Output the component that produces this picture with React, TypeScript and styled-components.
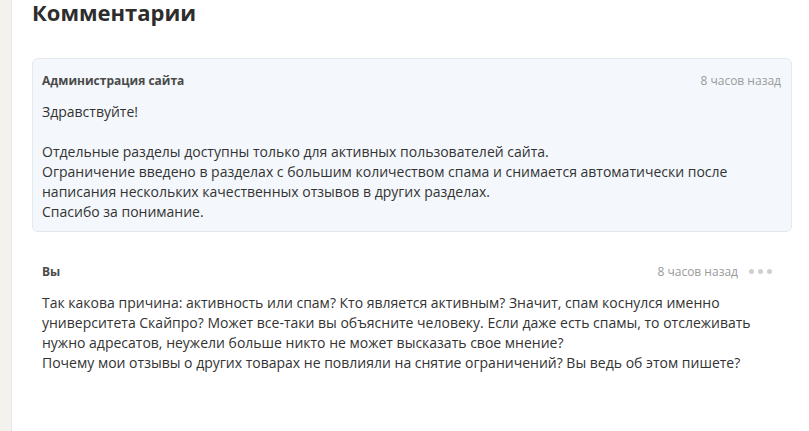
import React from "react";
import styled, { createGlobalStyle } from "styled-components";

const GlobalStyle = createGlobalStyle`
  html, body {
    margin: 0;
    padding: 0;
    background: #fff;
  }
  body {
    font-family: "Open Sans", "DejaVu Sans", sans-serif;
    color: #333;
  }
`;

const Page = styled.div`
  display: flex;
  min-height: 431px;
  overflow: hidden;
`;

const SideStrip = styled.div`
  flex: 0 0 11px;
  background: #f3f2ee;
  border-right: 1px solid #e9e7e1;
`;

const Main = styled.main`
  flex: 1;
  padding: 0 17px 0 20px;
`;

const Title = styled.h2`
  margin: 0 0 34px;
  font-size: 22px;
  line-height: 24px;
  font-weight: 700;
  color: #2d2d2d;
`;

const List = styled.div`
  display: flex;
  flex-direction: column;
  gap: 17px;
`;

const Comment = styled.article<{ $highlighted?: boolean }>`
  padding: 13px 10px 9px 9px;
  border: 1px solid ${(p) => (p.$highlighted ? "#e3e8ee" : "transparent")};
  border-radius: 6px;
  background: ${(p) => (p.$highlighted ? "#f4f8fc" : "transparent")};
`;

const Header = styled.div`
  display: flex;
  align-items: center;
  justify-content: space-between;
  height: 16px;
  margin-bottom: 14px;
`;

const Author = styled.span`
  font-size: 12px;
  font-weight: 700;
  color: #4a4a4a;
`;

const Meta = styled.div`
  display: flex;
  align-items: center;
  gap: 11px;
`;

const Time = styled.span`
  font-size: 12px;
  color: #9a9a9a;
`;

const Dots = styled.span`
  display: flex;
  gap: 4px;
  margin-right: 9px;
  span {
    width: 5px;
    height: 5px;
    border-radius: 50%;
    background: #cfcfcf;
  }
`;

const Text = styled.div`
  font-size: 14px;
  line-height: 20px;
  color: #333;
  p {
    margin: 0;
  }
  p + p {
    margin-top: 20px;
  }
`;

type CommentData = {
  author: string;
  time: string;
  paragraphs: string[][];
  highlighted?: boolean;
  menu?: boolean;
};

const comments: CommentData[] = [
  {
    author: "Администрация сайта",
    time: "8 часов назад",
    highlighted: true,
    paragraphs: [
      ["Здравствуйте!"],
      [
        "Отдельные разделы доступны только для активных пользователей сайта.",
        "Ограничение введено в разделах с большим количеством спама и снимается автоматически после написания нескольких качественных отзывов в других разделах.",
        "Спасибо за понимание.",
      ],
    ],
  },
  {
    author: "Вы",
    time: "8 часов назад",
    menu: true,
    paragraphs: [
      [
        "Так какова причина: активность или спам? Кто является активным? Значит, спам коснулся именно университета Скайпро? Может все-таки вы объясните человеку. Если даже есть спамы, то отслеживать нужно адресатов, неужели больше никто не может высказать свое мнение?",
        "Почему мои отзывы о других товарах не повлияли на снятие ограничений? Вы ведь об этом пишете?",
      ],
    ],
  },
];

const App = () => (
  <Page>
    <GlobalStyle />
    <SideStrip />
    <Main>
      <Title>Комментарии</Title>
      <List>
        {comments.map((c, i) => (
          <Comment key={i} $highlighted={c.highlighted}>
            <Header>
              <Author>{c.author}</Author>
              <Meta>
                <Time>{c.time}</Time>
                {c.menu && (
                  <Dots>
                    <span />
                    <span />
                    <span />
                  </Dots>
                )}
              </Meta>
            </Header>
            <Text>
              {c.paragraphs.map((lines, j) => (
                <p key={j}>
                  {lines.map((line, k) => (
                    <React.Fragment key={k}>
                      {k > 0 && <br />}
                      {line}
                    </React.Fragment>
                  ))}
                </p>
              ))}
            </Text>
          </Comment>
        ))}
      </List>
    </Main>
  </Page>
);

export default App;
